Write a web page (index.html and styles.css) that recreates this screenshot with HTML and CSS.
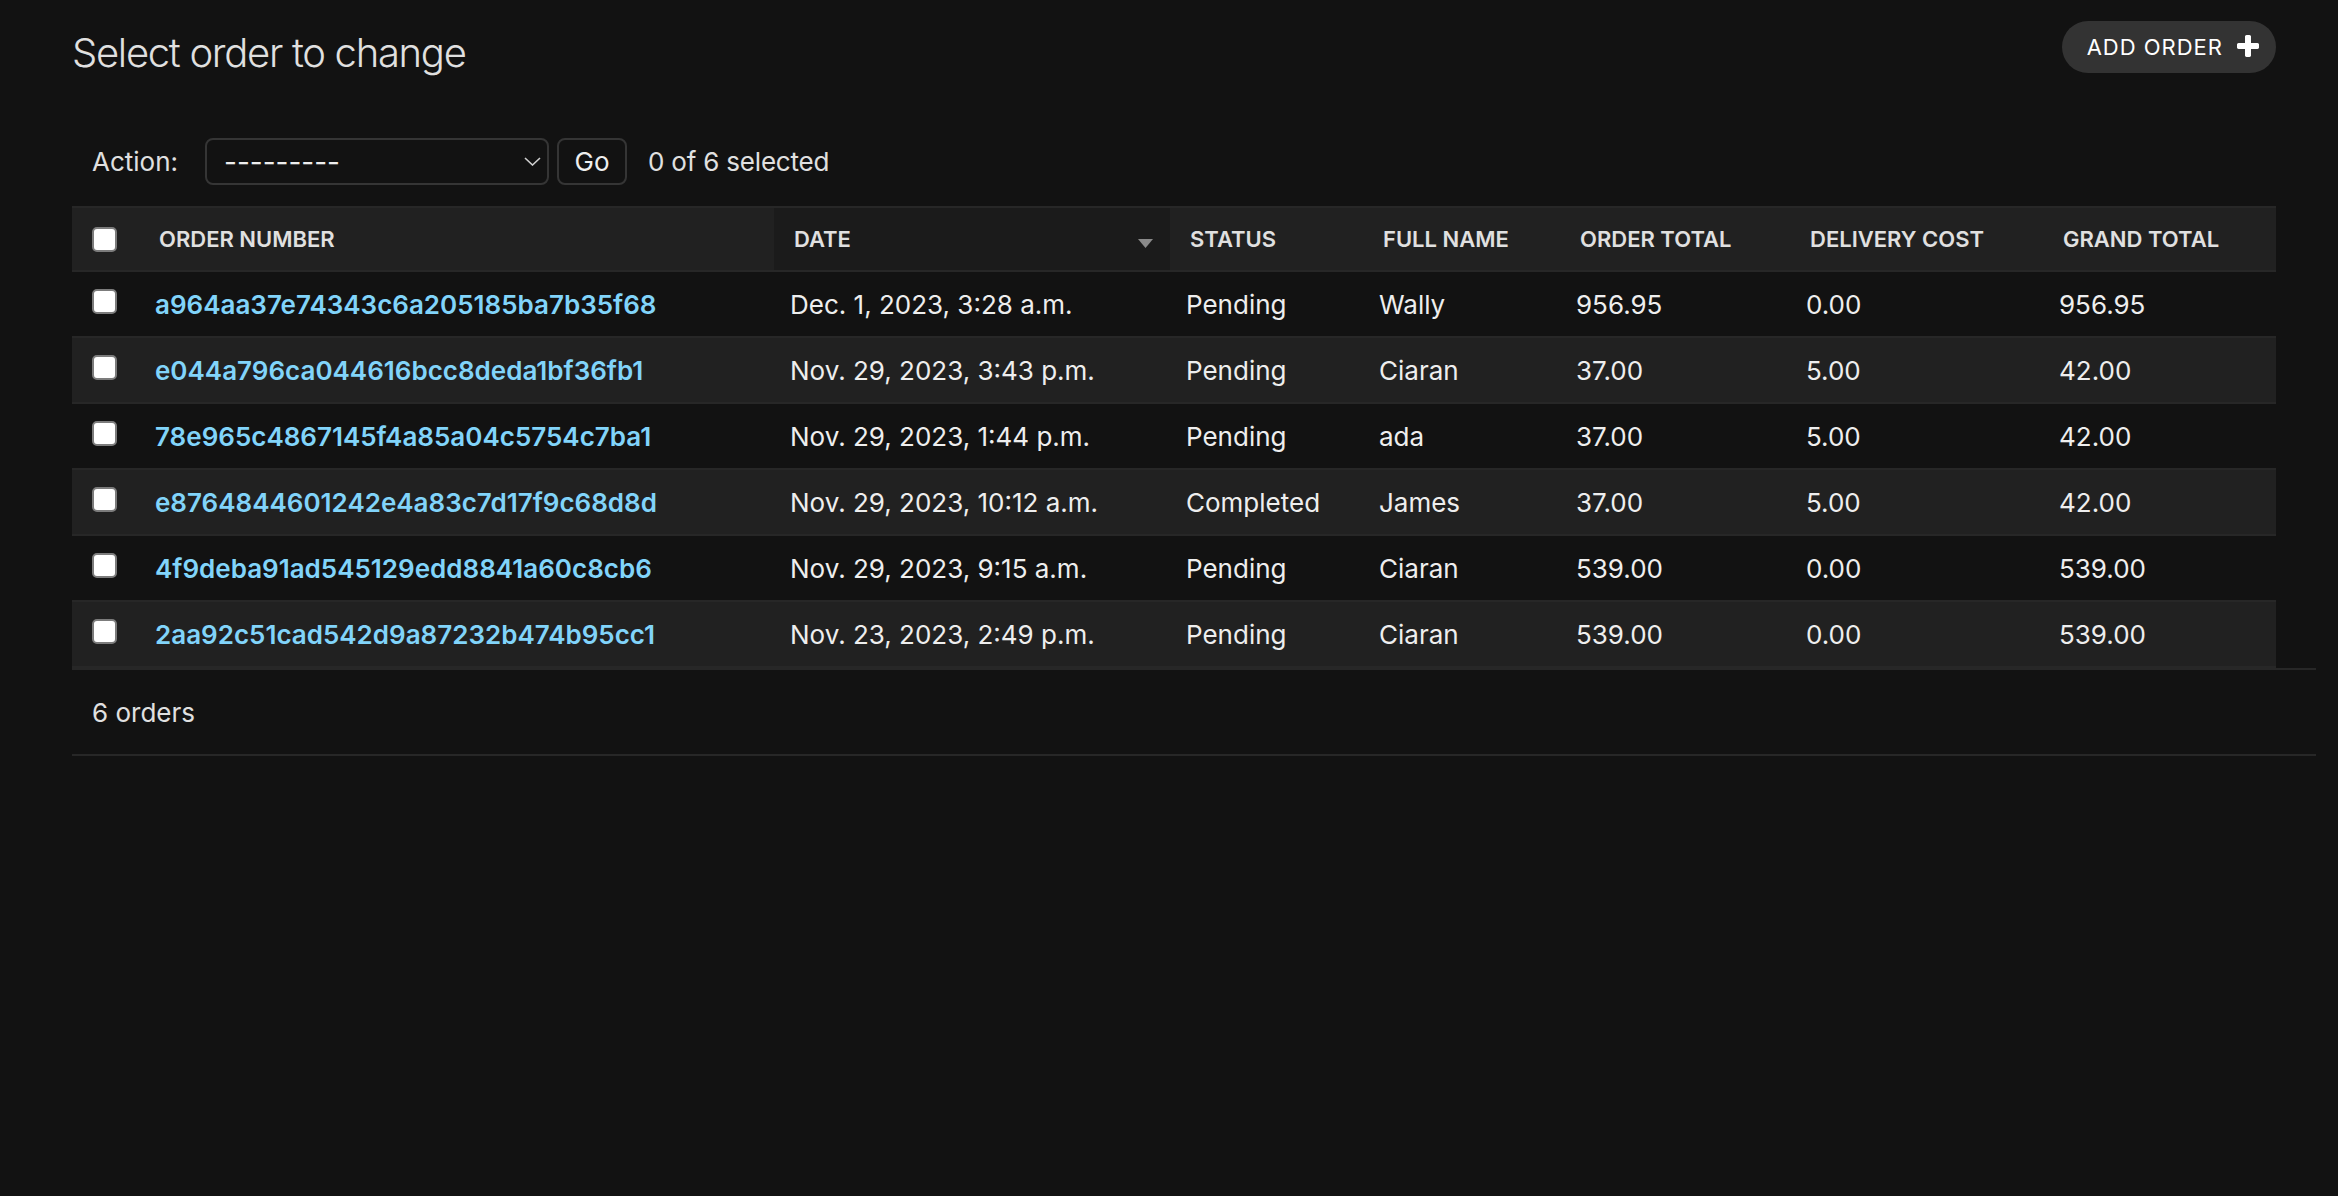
FILE: index.html
```html
<!DOCTYPE html>
<html lang="en">
<head>
<meta charset="utf-8">
<title>Select order to change</title>
<link rel="stylesheet" href="styles.css">
</head>
<body>
<div class="page">
  <div class="head">
    <h1 class="title">Select order to change</h1>
    <a class="add-btn" href="#">ADD ORDER
      <svg viewBox="0 0 1792 1792" aria-hidden="true"><path fill="#ffffff" d="M1600 736v192q0 40-28 68t-68 28h-416v416q0 40-28 68t-68 28h-192q-40 0-68-28t-28-68v-416h-416q-40 0-68-28t-28-68v-192q0-40 28-68t68-28h416v-416q0-40 28-68t68-28h192q40 0 68 28t28 68v416h416q40 0 68 28t28 68z"/></svg>
    </a>
  </div>

  <div class="changelist">
    <div class="actions">
      <label class="action-label">Action:</label>
      <div class="select-wrap">
        <select class="select"><option>---------</option></select>
        <svg class="chev" viewBox="0 0 17 9" aria-hidden="true"><path d="M1 1 L8.5 8 L16 1" fill="none" stroke="#cfcfcf" stroke-width="1.6"/></svg>
      </div>
      <button class="go" type="button">Go</button>
      <span class="counter">0 of 6 selected</span>
    </div>

    <table class="results">
      <thead>
        <tr>
          <th class="c-cb"><div class="th-cb"><input type="checkbox" class="cb"></div></th>
          <th class="c-num"><div class="th-text">Order number</div></th>
          <th class="c-date sorted"><div class="th-text th-sort"><span>Date</span><svg class="sort-arrow" viewBox="0 0 15 9" aria-hidden="true"><path d="M0 0 H15 L7.5 9 Z" fill="#8a8a8a"/></svg></div></th>
          <th class="c-status"><div class="th-text">Status</div></th>
          <th class="c-name"><div class="th-text">Full name</div></th>
          <th class="c-ot"><div class="th-text">Order total</div></th>
          <th class="c-dc"><div class="th-text">Delivery cost</div></th>
          <th class="c-gt"><div class="th-text">Grand total</div></th>
        </tr>
      </thead>
      <tbody>
        <tr>
          <td class="td-cb"><input type="checkbox" class="cb"></td>
          <th class="row-head"><a href="#">a964aa37e74343c6a205185ba7b35f68</a></th>
          <td>Dec. 1, 2023, 3:28 a.m.</td>
          <td>Pending</td>
          <td>Wally</td>
          <td>956.95</td>
          <td>0.00</td>
          <td>956.95</td>
        </tr>
        <tr>
          <td class="td-cb"><input type="checkbox" class="cb"></td>
          <th class="row-head"><a href="#">e044a796ca044616bcc8deda1bf36fb1</a></th>
          <td>Nov. 29, 2023, 3:43 p.m.</td>
          <td>Pending</td>
          <td>Ciaran</td>
          <td>37.00</td>
          <td>5.00</td>
          <td>42.00</td>
        </tr>
        <tr>
          <td class="td-cb"><input type="checkbox" class="cb"></td>
          <th class="row-head"><a href="#">78e965c4867145f4a85a04c5754c7ba1</a></th>
          <td>Nov. 29, 2023, 1:44 p.m.</td>
          <td>Pending</td>
          <td>ada</td>
          <td>37.00</td>
          <td>5.00</td>
          <td>42.00</td>
        </tr>
        <tr>
          <td class="td-cb"><input type="checkbox" class="cb"></td>
          <th class="row-head"><a href="#">e8764844601242e4a83c7d17f9c68d8d</a></th>
          <td>Nov. 29, 2023, 10:12 a.m.</td>
          <td>Completed</td>
          <td>James</td>
          <td>37.00</td>
          <td>5.00</td>
          <td>42.00</td>
        </tr>
        <tr>
          <td class="td-cb"><input type="checkbox" class="cb"></td>
          <th class="row-head"><a href="#">4f9deba91ad545129edd8841a60c8cb6</a></th>
          <td>Nov. 29, 2023, 9:15 a.m.</td>
          <td>Pending</td>
          <td>Ciaran</td>
          <td>539.00</td>
          <td>0.00</td>
          <td>539.00</td>
        </tr>
        <tr>
          <td class="td-cb"><input type="checkbox" class="cb"></td>
          <th class="row-head"><a href="#">2aa92c51cad542d9a87232b474b95cc1</a></th>
          <td>Nov. 23, 2023, 2:49 p.m.</td>
          <td>Pending</td>
          <td>Ciaran</td>
          <td>539.00</td>
          <td>0.00</td>
          <td>539.00</td>
        </tr>
      </tbody>
    </table>

    <p class="paginator">6 orders</p>
  </div>
</div>
</body>
</html>
```

FILE: styles.css
```css
* { box-sizing: border-box; }

html, body {
  margin: 0;
  background: #121212;
}

body {
  font-family: Inter, "Noto Sans", sans-serif;
  color: #eeeeee;
}

.page {
  padding: 21px 22px 0 72px;
}

/* Header row */
.head {
  display: flex;
  justify-content: space-between;
  align-items: flex-start;
  margin-right: 40px;
}

.title {
  margin: 8px 0 0;
  font-size: 40px;
  line-height: 48px;
  font-weight: 300;
  letter-spacing: -1.3px;
  color: #e0e0e0;
}

.add-btn {
  display: flex;
  align-items: center;
  height: 52px;
  padding: 0 14px 0 25px;
  border-radius: 26px;
  background: #333333;
  color: #ffffff;
  font-size: 22px;
  letter-spacing: 1px;
  text-decoration: none;
}

.add-btn svg {
  width: 28px;
  height: 28px;
  margin-left: 11px;
}

/* Changelist */
.changelist {
  margin-top: 41px;
}

.actions {
  display: flex;
  align-items: center;
  padding: 20px 20px 21px;
  font-size: 26px;
  color: #e0e0e0;
}

.action-label {
  margin-right: 27px;
}

.select-wrap {
  position: relative;
  width: 344px;
  height: 47px;
}

.select {
  appearance: none;
  -webkit-appearance: none;
  width: 100%;
  height: 100%;
  margin: 0;
  background: #121212;
  border: 2px solid #353535;
  border-radius: 8px;
  color: #eeeeee;
  font-family: inherit;
  font-size: 28px;
  padding: 0 0 0 17px;
}

.chev {
  position: absolute;
  right: 8px;
  top: 19px;
  width: 17px;
  height: 9px;
  pointer-events: none;
}

.go {
  margin: 0 0 0 8px;
  height: 47px;
  width: 70px;
  padding: 0;
  border: 2px solid #353535;
  border-radius: 8px;
  background: #121212;
  color: #eeeeee;
  font-family: inherit;
  font-size: 26px;
}

.counter {
  margin-left: 21px;
  letter-spacing: -0.2px;
}

/* Table */
.results {
  border-collapse: separate;
  border-spacing: 0;
  table-layout: fixed;
  width: 2204px;
}

.c-cb { width: 67px; }
.c-num { width: 635px; }
.c-date { width: 396px; }
.c-status { width: 193px; }
.c-name { width: 197px; }
.c-ot { width: 230px; }
.c-dc { width: 253px; }
.c-gt { width: 233px; }

thead th {
  padding: 0;
  background: #212121;
  border-top: 2px solid #272727;
  border-bottom: 2px solid #272727;
  font-size: 22px;
  font-weight: 600;
  text-transform: uppercase;
  color: #e0e0e0;
  text-align: left;
  white-space: nowrap;
  vertical-align: middle;
}

thead th.sorted {
  background: #1b1b1b;
}

.th-text {
  padding: 15px 20px;
  line-height: 32px;
}

.th-sort {
  display: flex;
  justify-content: space-between;
  align-items: center;
  padding-right: 17px;
}

.sort-arrow {
  width: 15px;
  height: 9px;
  margin-top: 9px;
}

.th-cb {
  padding: 0 20px;
}

tbody td,
tbody th {
  padding: 17px 16px 15px;
  line-height: 32px;
  font-size: 26px;
  border-bottom: 2px solid #272727;
  vertical-align: top;
  text-align: left;
  white-space: nowrap;
  color: #eeeeee;
}

tbody tr:nth-child(odd) { background: #121212; }
tbody tr:nth-child(even) { background: #212121; }

.row-head {
  font-weight: 600;
}

.row-head a {
  color: #81d4fa;
  text-decoration: none;
}

tbody td.td-cb {
  padding-left: 20px;
}

.cb {
  appearance: none;
  -webkit-appearance: none;
  display: block;
  width: 25px;
  height: 25px;
  margin: 0;
  background: #ffffff;
  border: 2px solid #7c7c7c;
  border-radius: 5px;
}

.td-cb .cb {
  margin-top: 0;
}

.paginator {
  margin: 0;
  padding: 21px 20px 19px;
  line-height: 44px;
  font-size: 26px;
  color: #e0e0e0;
  border-top: 2px solid #272727;
  border-bottom: 2px solid #272727;
}
```
